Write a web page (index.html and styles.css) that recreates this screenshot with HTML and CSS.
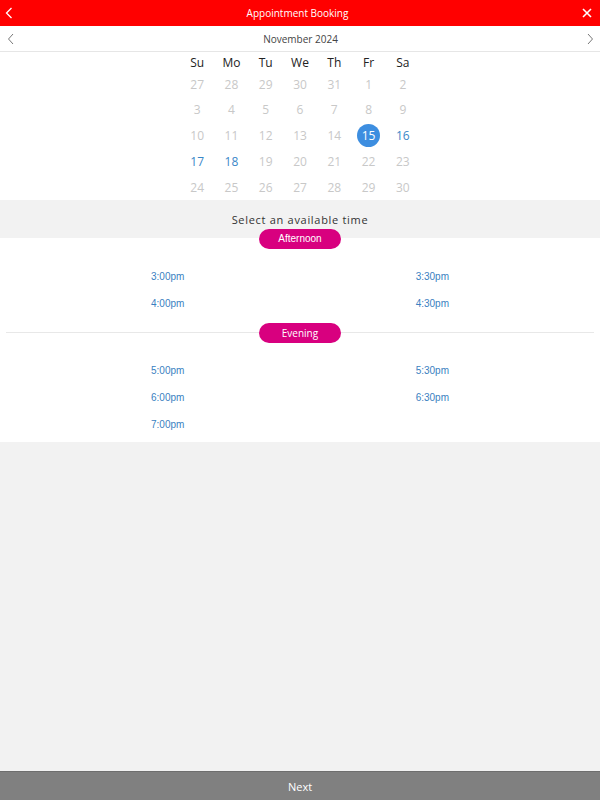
FILE: index.html
```html
<!DOCTYPE html>
<html>
<head>
<meta charset="utf-8">
<link rel="stylesheet" href="styles.css">
</head>
<body>
<div class="app">
  <header class="topbar">
    <svg class="icon back" width="8" height="12" viewBox="0 0 8 12"><path d="M6.5 1 L1.5 6 L6.5 11" fill="none" stroke="#fff" stroke-width="1.3"/></svg>
    <div class="title">Appointment Booking</div>
    <svg class="icon close" width="10" height="10" viewBox="0 0 10 10"><path d="M1 1 L9 9 M9 1 L1 9" fill="none" stroke="#fff" stroke-width="1.6"/></svg>
  </header>
  <div class="monthbar">
    <svg class="icon" width="8" height="12" viewBox="0 0 8 12"><path d="M6 1 L1.5 6 L6 11" fill="none" stroke="#777" stroke-width="1"/></svg>
    <div class="month">November 2024</div>
    <svg class="icon" width="8" height="12" viewBox="0 0 8 12"><path d="M2 1 L6.5 6 L2 11" fill="none" stroke="#777" stroke-width="1"/></svg>
  </div>
  <section class="calendar">
    <div class="grid">
      <div class="dow">Su</div><div class="dow">Mo</div><div class="dow">Tu</div><div class="dow">We</div><div class="dow">Th</div><div class="dow">Fr</div><div class="dow">Sa</div>
      <div class="d">27</div><div class="d">28</div><div class="d">29</div><div class="d">30</div><div class="d">31</div><div class="d">1</div><div class="d">2</div>
      <div class="d">3</div><div class="d">4</div><div class="d">5</div><div class="d">6</div><div class="d">7</div><div class="d">8</div><div class="d">9</div>
      <div class="d">10</div><div class="d">11</div><div class="d">12</div><div class="d">13</div><div class="d">14</div><div class="d"><span class="sel">15</span></div><div class="d av">16</div>
      <div class="d av">17</div><div class="d av">18</div><div class="d">19</div><div class="d">20</div><div class="d">21</div><div class="d">22</div><div class="d">23</div>
      <div class="d">24</div><div class="d">25</div><div class="d">26</div><div class="d">27</div><div class="d">28</div><div class="d">29</div><div class="d">30</div>
    </div>
  </section>
  <div class="prompt">Select an available time</div>
  <section class="times">
    <div class="period first">
      <div class="pill arial">Afternoon</div>
    </div>
    <div class="slots">
      <div class="slot">3:00pm</div><div class="slot r">3:30pm</div>
      <div class="slot">4:00pm</div><div class="slot r">4:30pm</div>
    </div>
    <div class="period">
      <div class="pill">Evening</div>
    </div>
    <div class="slots last">
      <div class="slot">5:00pm</div><div class="slot r">5:30pm</div>
      <div class="slot">6:00pm</div><div class="slot r">6:30pm</div>
      <div class="slot">7:00pm</div>
    </div>
  </section>
  <div class="spacer"></div>
  <footer class="footer">Next</footer>
</div>
</body>
</html>
```
FILE: styles.css
```css
* { box-sizing: border-box; }
html, body { margin: 0; padding: 0; }
body { font-family: "Open Sans", "Liberation Sans", sans-serif; background: #f2f2f2; }
.app { width: 600px; height: 800px; display: flex; flex-direction: column; }
.topbar { height: 26px; background: #ff0000; display: flex; align-items: center; justify-content: space-between; padding: 0 8px 0 5px; flex: none; }
.title { color: #fff; font-size: 10px; }
.icon { display: block; }
.monthbar { height: 26px; background: #fff; display: flex; align-items: center; justify-content: space-between; padding: 0 6px 0 7px; border-bottom: 1px solid #e6e6e6; flex: none; }
.month { font-size: 10px; color: #444; }
.calendar { background: #fff; height: 148px; padding-top: 1px; flex: none; overflow: hidden; }
.grid { width: 240px; margin: 0 auto; display: grid; grid-template-columns: repeat(7, 1fr); grid-template-rows: 18.3px repeat(5, 25.8px); }
.dow { font-size: 12px; color: #222; display: flex; align-items: center; justify-content: center; }
.d { font-size: 12px; color: #c8c8c8; display: flex; align-items: center; justify-content: center; }
.d.av { color: #3a87c8; }
.sel { width: 23px; height: 23px; border-radius: 50%; background: #3d8ee0; color: #fff; display: flex; align-items: center; justify-content: center; }
.prompt { height: 38px; flex: none; text-align: center; font-size: 11px; letter-spacing: 0.7px; color: #333; padding-top: 12px; }
.times { background: #fff; flex: none; padding: 0 6px 11px; }
.period { height: 1px; background: #e8e8e8; display: flex; justify-content: center; align-items: center; }
.period.first { background: transparent; }
.pill { width: 82px; height: 20px; border-radius: 10px; background: #d8007f; color: #fff; font-size: 10px; display: flex; align-items: center; justify-content: center; flex: none; }
.pill.arial { font-family: "Liberation Sans", Arial, sans-serif; }
.slots { display: grid; grid-template-columns: 1fr 1fr; grid-auto-rows: 12px; row-gap: 15px; padding: 32px 145px 0; margin-bottom: 22px; }
.slots.last { margin-bottom: 0; }
.slot { font-family: "Liberation Sans", Arial, sans-serif; font-size: 10px; line-height: 12px; color: #3a7fc1; }
.slot.r { text-align: right; }
.spacer { flex: 1; }
.footer { height: 29px; flex: none; background: #808080; border-top: 1px solid #6e6e6e; color: #fff; font-size: 11px; display: flex; align-items: center; justify-content: center; }
```
